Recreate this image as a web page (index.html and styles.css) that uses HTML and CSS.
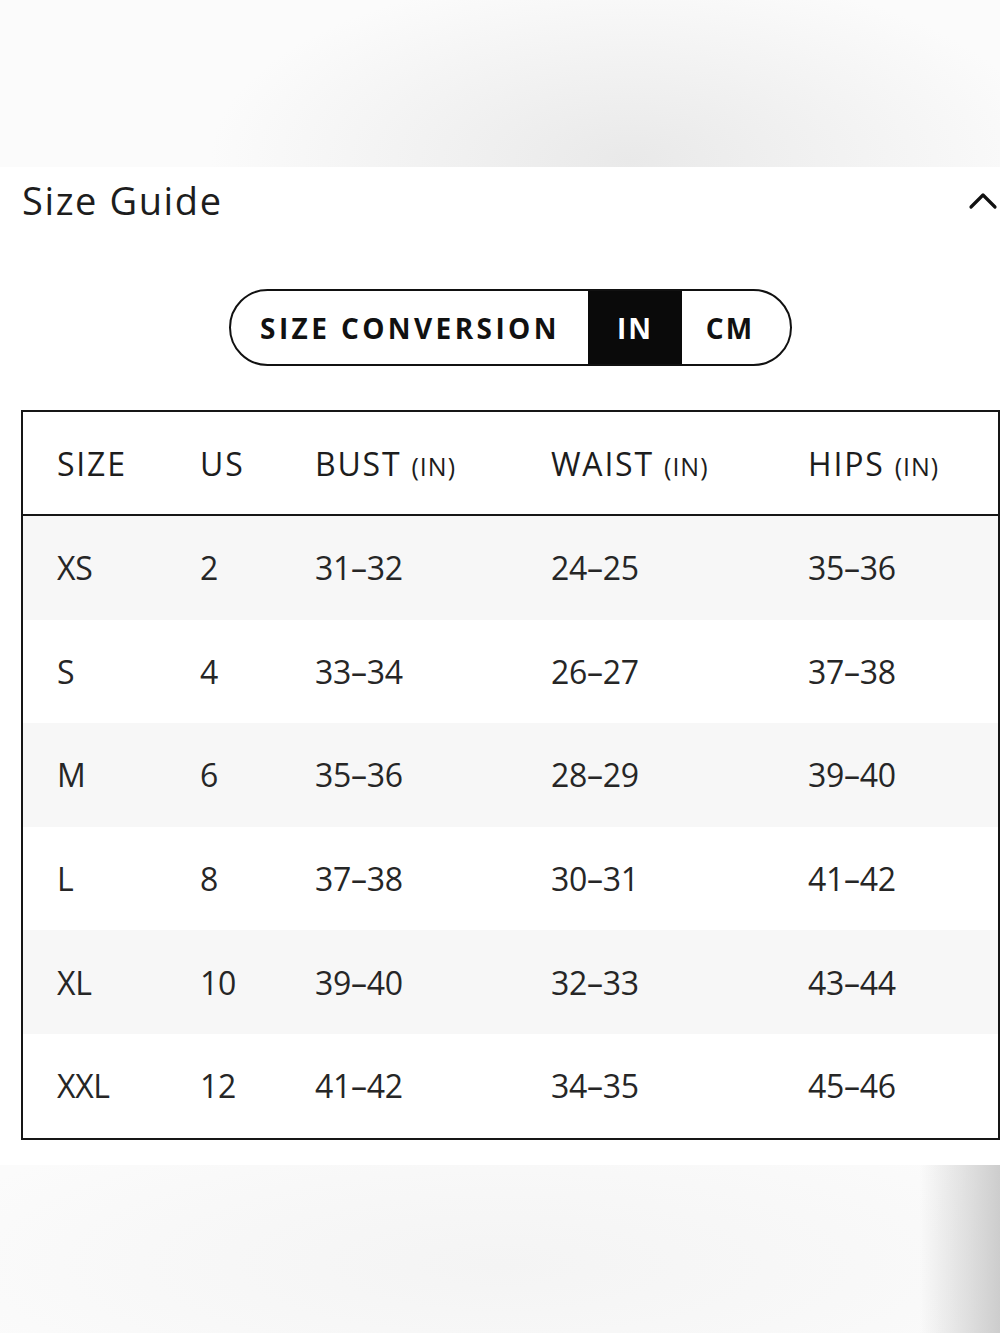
FILE: index.html
```html
<!DOCTYPE html>
<html lang="en">
<head>
<meta charset="utf-8">
<title>Size Guide</title>
<link rel="stylesheet" href="styles.css">
</head>
<body>
<div class="backdrop-top"></div>
<section class="panel">
  <div class="panel-head">
    <h2 class="title">Size Guide</h2>
    <svg class="chevron" width="30" height="20" viewBox="0 0 30 20" aria-hidden="true">
      <path d="M3 16 L15 4 L27 16" fill="none" stroke="#111" stroke-width="3.2" stroke-linecap="round" stroke-linejoin="round"/>
    </svg>
  </div>
  <div class="switch-wrap">
    <div class="switch">
      <span class="switch-label">SIZE CONVERSION</span>
      <span class="switch-opt active">IN</span>
      <span class="switch-opt">CM</span>
    </div>
  </div>
  <div class="table">
    <div class="row head">
      <span>SIZE</span><span>US</span><span>BUST <small>(IN)</small></span><span>WAIST <small>(IN)</small></span><span>HIPS <small>(IN)</small></span>
    </div>
    <div class="row shade"><span>XS</span><span>2</span><span>31–32</span><span>24–25</span><span>35–36</span></div>
    <div class="row"><span>S</span><span>4</span><span>33–34</span><span>26–27</span><span>37–38</span></div>
    <div class="row shade"><span>M</span><span>6</span><span>35–36</span><span>28–29</span><span>39–40</span></div>
    <div class="row"><span>L</span><span>8</span><span>37–38</span><span>30–31</span><span>41–42</span></div>
    <div class="row shade"><span>XL</span><span>10</span><span>39–40</span><span>32–33</span><span>43–44</span></div>
    <div class="row"><span>XXL</span><span>12</span><span>41–42</span><span>34–35</span><span>45–46</span></div>
  </div>
</section>
<div class="backdrop-bottom"></div>
</body>
</html>
```

FILE: styles.css
```css
* { box-sizing: border-box; }
html, body { margin: 0; padding: 0; }
body {
  width: 1000px;
  height: 1333px;
  overflow: hidden;
  background: #ffffff;
  font-family: "Open Sans", "Noto Sans", sans-serif;
  color: #1e1e1e;
}
.backdrop-top {
  height: 167px;
  background:
    radial-gradient(ellipse 420px 190px at 630px 160px, #e9e9e9 0%, #f1f1f1 45%, rgba(250,250,250,0) 100%),
    #fbfbfb;
}
.backdrop-bottom {
  height: 168px;
  background:
    linear-gradient(to right, rgba(255,255,255,0) 0%, rgba(255,255,255,0) 92%, rgba(200,200,200,0.9) 100%),
    radial-gradient(ellipse 600px 160px at 500px 100px, #f4f4f4 0%, #f8f8f8 60%, #fbfbfb 100%),
    #f8f8f8;
}
.panel {
  height: 998px;
  background: #ffffff;
  padding: 0 0 0 21px;
}
.panel-head {
  display: flex;
  align-items: center;
  justify-content: space-between;
  height: 66px;
  padding-right: 2px;
}
.title {
  margin: 0;
  font-size: 38px;
  font-weight: 400;
  letter-spacing: 1.6px;
  color: #1d1d1d;
  padding-left: 1px;
}
.chevron { display: block; margin-top: 2px; }
.switch-wrap {
  display: flex;
  justify-content: center;
  padding-top: 56px;
  padding-right: 0;
}
.switch {
  display: flex;
  align-items: stretch;
  height: 77px;
  border: 2.5px solid #111;
  border-radius: 40px;
  overflow: hidden;
  margin-left: 0;
}
.switch-label {
  display: flex;
  align-items: center;
  padding: 0 28px 0 29px;
  font-size: 28px;
  font-weight: 700;
  letter-spacing: 3.4px;
  color: #111;
}
.switch-opt {
  display: flex;
  align-items: center;
  justify-content: center;
  width: 94px;
  font-size: 28px;
  font-weight: 700;
  letter-spacing: 2px;
  color: #111;
}
.switch-opt.active { background: #0a0a0a; color: #fff; }
.switch-opt:last-child { width: 108px; padding-right: 12px; }
.table {
  margin-top: 44px;
  width: 979px;
  border: 2.5px solid #161616;
  border-right-width: 2px;
}
.row {
  display: grid;
  grid-template-columns: 143px 115px 236px 257px 1fr;
  align-items: center;
  height: 103.6px;
  padding-left: 34px;
  font-size: 32px;
  font-weight: 400;
  letter-spacing: -0.3px;
  color: #262626;
}
.row.head {
  height: 104px;
  border-bottom: 2.5px solid #161616;
  font-size: 32px;
  color: #1d1d1d;
  letter-spacing: 1.8px;
}
.row.head small { font-size: 25px; letter-spacing: 1px; }
.row.shade { background: #f7f7f7; }
```
